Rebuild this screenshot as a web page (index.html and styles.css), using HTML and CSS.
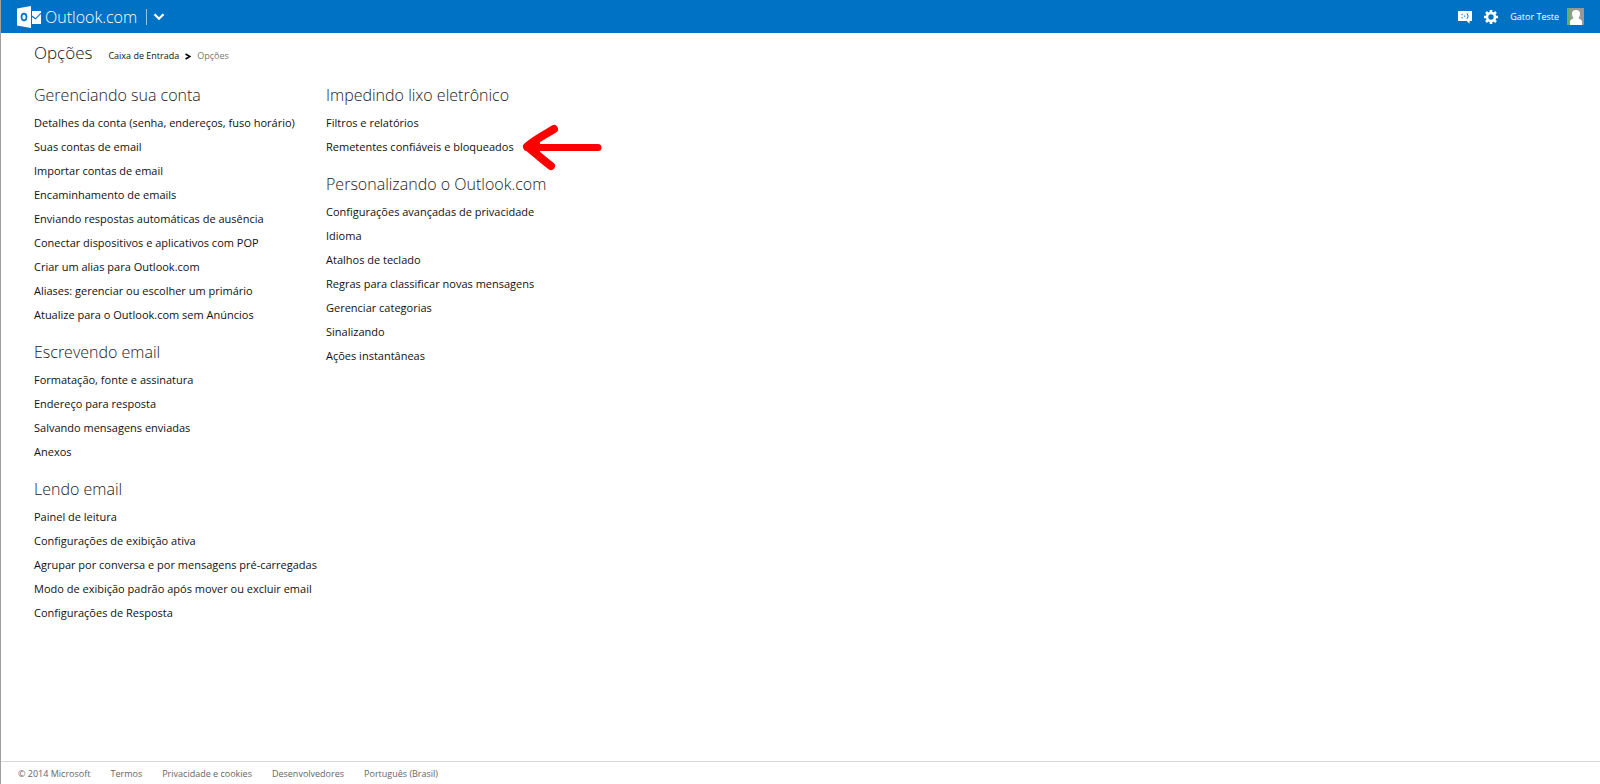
FILE: index.html
```html
<!DOCTYPE html>
<html lang="pt-BR">
<head>
<meta charset="utf-8">
<meta name="viewport" content="width=device-width, initial-scale=1">
<title>Opções - Outlook.com</title>
<link rel="stylesheet" href="styles.css">
</head>
<body>
<header class="topbar">
  <a class="brand" href="#">
    <svg class="brand-logo" viewBox="0 0 24 22" width="24" height="22" aria-hidden="true">
      <path fill="#fff" d="M0 2.500 14 0v22L0 19.500z"/>
      <ellipse cx="7" cy="11" rx="2.500" ry="3.400" fill="none" stroke="#0072c6" stroke-width="1.700"/>
      <path fill="#fff" d="M15 5h9v1.500l-5.500 5.500L15 9.500z"/>
      <path fill="#fff" d="M15 11l3.500 2.400L24 8v10h-9z"/>
    </svg>
    <span class="brand-name">Outlook.com</span>
  </a>
  <button class="switcher" type="button" aria-label="Alternar serviços">
    <svg viewBox="0 0 12 8" width="12" height="8" aria-hidden="true"><path d="M1.500 1.200 6 5.800l4.500-4.600" fill="none" stroke="#fff" stroke-width="2.200"/></svg>
  </button>
  <div class="tools">
    <button class="tool" type="button" aria-label="Mensagens">
      <svg viewBox="0 0 14 14" width="14" height="14" aria-hidden="true">
        <path fill="#fff" d="M0 1h14v10h-2.500v2.800L8.700 11H0z"/>
        <path d="M4 3.800v1.400M4 7v1.400M5.800 6.100h1.600M9 3.400q2.400 2.700 0 5.400" fill="none" stroke="#0072c6" stroke-width="1"/>
      </svg>
    </button>
    <button class="tool" type="button" aria-label="Configurações">
      <svg viewBox="0 0 14 14" width="14" height="14" aria-hidden="true">
        <circle cx="7" cy="7" r="4" fill="none" stroke="#fff" stroke-width="2.600"/>
        <path d="M7 0v3M7 11v3M0 7h3M11 7h3M2 2l2.200 2.200M9.800 9.800 12 12M12 2 9.800 4.200M4.200 9.800 2 12" stroke="#fff" stroke-width="2.600"/>
      </svg>
    </button>
    <a class="account" href="#">
      <span>Gator Teste</span>
      <svg viewBox="0 0 17 17" width="17" height="17" aria-hidden="true">
        <path fill="#979797" d="M0 0h17v17H0z"/>
        <path fill="#62b35a" d="M0 0h3v17H0z"/>
        <path fill="#fff" d="M3 17v-3q0-3 3.500-3.600Q5 8.500 5 5.700 5 2 9 2t4 3.700q0 2.800-1.500 4.700Q15 11 15 14v3z"/>
      </svg>
    </a>
  </div>
</header>
<main class="page">
  <div class="title-row">
    <h1 class="title">Opções</h1>
    <nav class="crumbs" aria-label="Caminho">
      <a href="#">Caixa de Entrada</a>
      <svg viewBox="0 0 6 7" width="6" height="7" aria-hidden="true"><path d="M.5 1 5 3.500.5 6" fill="none" stroke="#000" stroke-width="1.500"/></svg>
      <span class="current">Opções</span>
    </nav>
  </div>
  <div class="columns">
    <div class="column">
      <section class="group">
        <h2>Gerenciando sua conta</h2>
        <ul>
          <li><a href="#">Detalhes da conta (senha, endereços, fuso horário)</a></li>
          <li><a href="#">Suas contas de email</a></li>
          <li><a href="#">Importar contas de email</a></li>
          <li><a href="#">Encaminhamento de emails</a></li>
          <li><a href="#">Enviando respostas automáticas de ausência</a></li>
          <li><a href="#">Conectar dispositivos e aplicativos com POP</a></li>
          <li><a href="#">Criar um alias para Outlook.com</a></li>
          <li><a href="#">Aliases: gerenciar ou escolher um primário</a></li>
          <li><a href="#">Atualize para o Outlook.com sem Anúncios</a></li>
        </ul>
      </section>
      <section class="group">
        <h2>Escrevendo email</h2>
        <ul>
          <li><a href="#">Formatação, fonte e assinatura</a></li>
          <li><a href="#">Endereço para resposta</a></li>
          <li><a href="#">Salvando mensagens enviadas</a></li>
          <li><a href="#">Anexos</a></li>
        </ul>
      </section>
      <section class="group">
        <h2>Lendo email</h2>
        <ul>
          <li><a href="#">Painel de leitura</a></li>
          <li><a href="#">Configurações de exibição ativa</a></li>
          <li><a href="#">Agrupar por conversa e por mensagens pré-carregadas</a></li>
          <li><a href="#">Modo de exibição padrão após mover ou excluir email</a></li>
          <li><a href="#">Configurações de Resposta</a></li>
        </ul>
      </section>
    </div>
    <div class="column">
      <section class="group">
        <h2>Impedindo lixo eletrônico</h2>
        <ul>
          <li><a href="#">Filtros e relatórios</a></li>
          <li class="marked"><a href="#">Remetentes confiáveis e bloqueados</a>
            <svg class="arrow" viewBox="0 0 82 48" width="82" height="48" aria-hidden="true">
              <path d="M34 6C26 11 17 15 7 23.500c8 6 14 12 24 19.500" fill="none" stroke="#f00" stroke-width="8" stroke-linecap="round" stroke-linejoin="round"/>
              <path d="M7 24.500h33M40 24.500h38" fill="none" stroke="#f00" stroke-width="7" stroke-linecap="round"/>
              <path d="M5 24 20 14v18z" fill="#f00"/>
            </svg>
          </li>
        </ul>
      </section>
      <section class="group">
        <h2>Personalizando o Outlook.com</h2>
        <ul>
          <li><a href="#">Configurações avançadas de privacidade</a></li>
          <li><a href="#">Idioma</a></li>
          <li><a href="#">Atalhos de teclado</a></li>
          <li><a href="#">Regras para classificar novas mensagens</a></li>
          <li><a href="#">Gerenciar categorias</a></li>
          <li><a href="#">Sinalizando</a></li>
          <li><a href="#">Ações instantâneas</a></li>
        </ul>
      </section>
    </div>
  </div>
</main>
<footer class="footer">
  <span>© 2014 Microsoft</span>
  <a href="#">Termos</a>
  <a href="#">Privacidade e cookies</a>
  <a href="#">Desenvolvedores</a>
  <a href="#">Português (Brasil)</a>
</footer>
</body>
</html>
```

FILE: styles.css
```css
* {
  box-sizing: border-box;
}

body {
  display: flex;
  flex-direction: column;
  min-height: 100vh;
  margin: 0;
  border-left: 1px solid #a0a0a0;
  background: #fff;
  color: #111;
  font-family: "Open Sans", "Noto Sans", sans-serif;
  font-size: 11px;
  line-height: 24px;
}

a {
  color: inherit;
  text-decoration: none;
}

button {
  display: flex;
  align-items: center;
  padding: 0;
  border: 0;
  background: none;
}

svg {
  display: block;
  flex: none;
}

h1,
h2,
ul {
  margin: 0;
  padding: 0;
  font-weight: 300;
  list-style: none;
}

.topbar {
  display: flex;
  align-items: center;
  height: 33px;
  padding: 0 16px;
  background: #0072c6;
  color: #fff;
}

.brand {
  display: flex;
  align-items: center;
  gap: 4px;
}

.brand-name {
  font-size: 16px;
  font-weight: 300;
}

.switcher {
  height: 16px;
  margin-left: 9px;
  padding-left: 6px;
  border-left: 1px solid #8fc4ea;
}

.tools {
  display: flex;
  align-items: center;
  gap: 12px;
  margin-left: auto;
}

.account {
  display: flex;
  align-items: center;
  gap: 8px;
  font-size: 9px;
}

.page {
  flex: 1;
  padding: 4px 33px 16px;
  white-space: nowrap;
}

.title-row {
  display: flex;
  align-items: baseline;
  gap: 16px;
  margin-bottom: 10px;
}

.title {
  font-size: 17px;
  line-height: 32px;
}

.crumbs {
  display: flex;
  align-items: center;
  gap: 6px;
  font-size: 9px;
}

.current {
  color: #767676;
}

.columns {
  display: grid;
  grid-template-columns: 292px 1fr;
}

.column {
  display: flex;
  flex-direction: column;
  gap: 9px;
}

.group h2 {
  color: #222;
  font-size: 16px;
  line-height: 32px;
}

.group li {
  font-weight: 400;
}

.marked {
  position: relative;
  width: max-content;
}

.arrow {
  position: absolute;
  top: -12px;
  left: calc(100% + 6px);
}

.footer {
  display: flex;
  flex-wrap: wrap;
  gap: 0 20px;
  padding: 2px 17px 0;
  border-top: 1px solid #d8d8d8;
  color: #666;
  font-size: 9px;
  line-height: 20px;
}
```
